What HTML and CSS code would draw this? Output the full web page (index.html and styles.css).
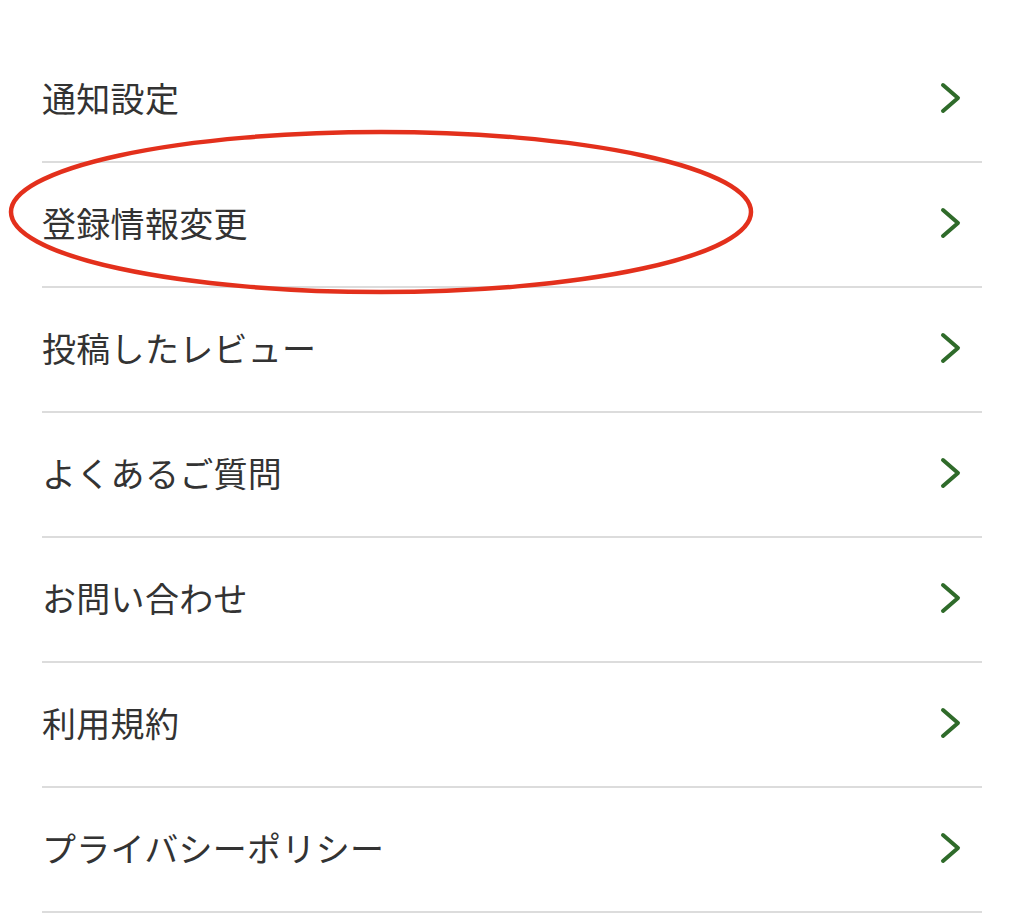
FILE: index.html
```html
<!DOCTYPE html>
<html lang="ja">
<head>
<meta charset="utf-8">
<title>設定</title>
<link rel="stylesheet" href="styles.css">
</head>
<body>
<main class="page">
  <ul class="menu">
    <li class="menu-item"><span class="label">通知設定</span><svg class="chev" viewBox="0 0 22 32"><path d="M3 3 L18 16 L3 29"/></svg></li>
    <li class="menu-item"><span class="label">登録情報変更</span><svg class="chev" viewBox="0 0 22 32"><path d="M3 3 L18 16 L3 29"/></svg></li>
    <li class="menu-item"><span class="label">投稿したレビュー</span><svg class="chev" viewBox="0 0 22 32"><path d="M3 3 L18 16 L3 29"/></svg></li>
    <li class="menu-item"><span class="label">よくあるご質問</span><svg class="chev" viewBox="0 0 22 32"><path d="M3 3 L18 16 L3 29"/></svg></li>
    <li class="menu-item"><span class="label">お問い合わせ</span><svg class="chev" viewBox="0 0 22 32"><path d="M3 3 L18 16 L3 29"/></svg></li>
    <li class="menu-item"><span class="label">利用規約</span><svg class="chev" viewBox="0 0 22 32"><path d="M3 3 L18 16 L3 29"/></svg></li>
    <li class="menu-item"><span class="label">プライバシーポリシー</span><svg class="chev" viewBox="0 0 22 32"><path d="M3 3 L18 16 L3 29"/></svg></li>
  </ul>
  <svg class="circle-mark" width="1024" height="922" viewBox="0 0 1024 922">
    <ellipse cx="381" cy="212" rx="370" ry="80"/>
  </svg>
</main>
</body>
</html>
```

FILE: styles.css
```css
html, body {
  margin: 0;
  padding: 0;
  background: #ffffff;
}
body {
  width: 1024px;
  height: 922px;
  overflow: hidden;
  font-family: "Noto Sans CJK JP", "Noto Sans", sans-serif;
  color: #333333;
}
.page {
  position: relative;
  padding: 38px 42px 0 42px;
}
.menu {
  list-style: none;
  margin: 0;
  padding: 0;
}
.menu-item {
  height: 120px;
  padding-bottom: 3px;
  border-bottom: 2px solid #dcdcdc;
  display: flex;
  align-items: center;
  justify-content: space-between;
  padding-right: 20px;
}
.label {
  font-size: 34px;
  line-height: 1;
  letter-spacing: 0.3px;
}
.chev {
  width: 22px;
  height: 32px;
}
.chev path {
  fill: none;
  stroke: #2f6b2a;
  stroke-width: 4;
  stroke-linecap: round;
  stroke-linejoin: round;
}
.circle-mark {
  position: absolute;
  left: 0;
  top: 0;
  pointer-events: none;
}
.circle-mark ellipse {
  fill: none;
  stroke: #e3301c;
  stroke-width: 4.5;
}
```
